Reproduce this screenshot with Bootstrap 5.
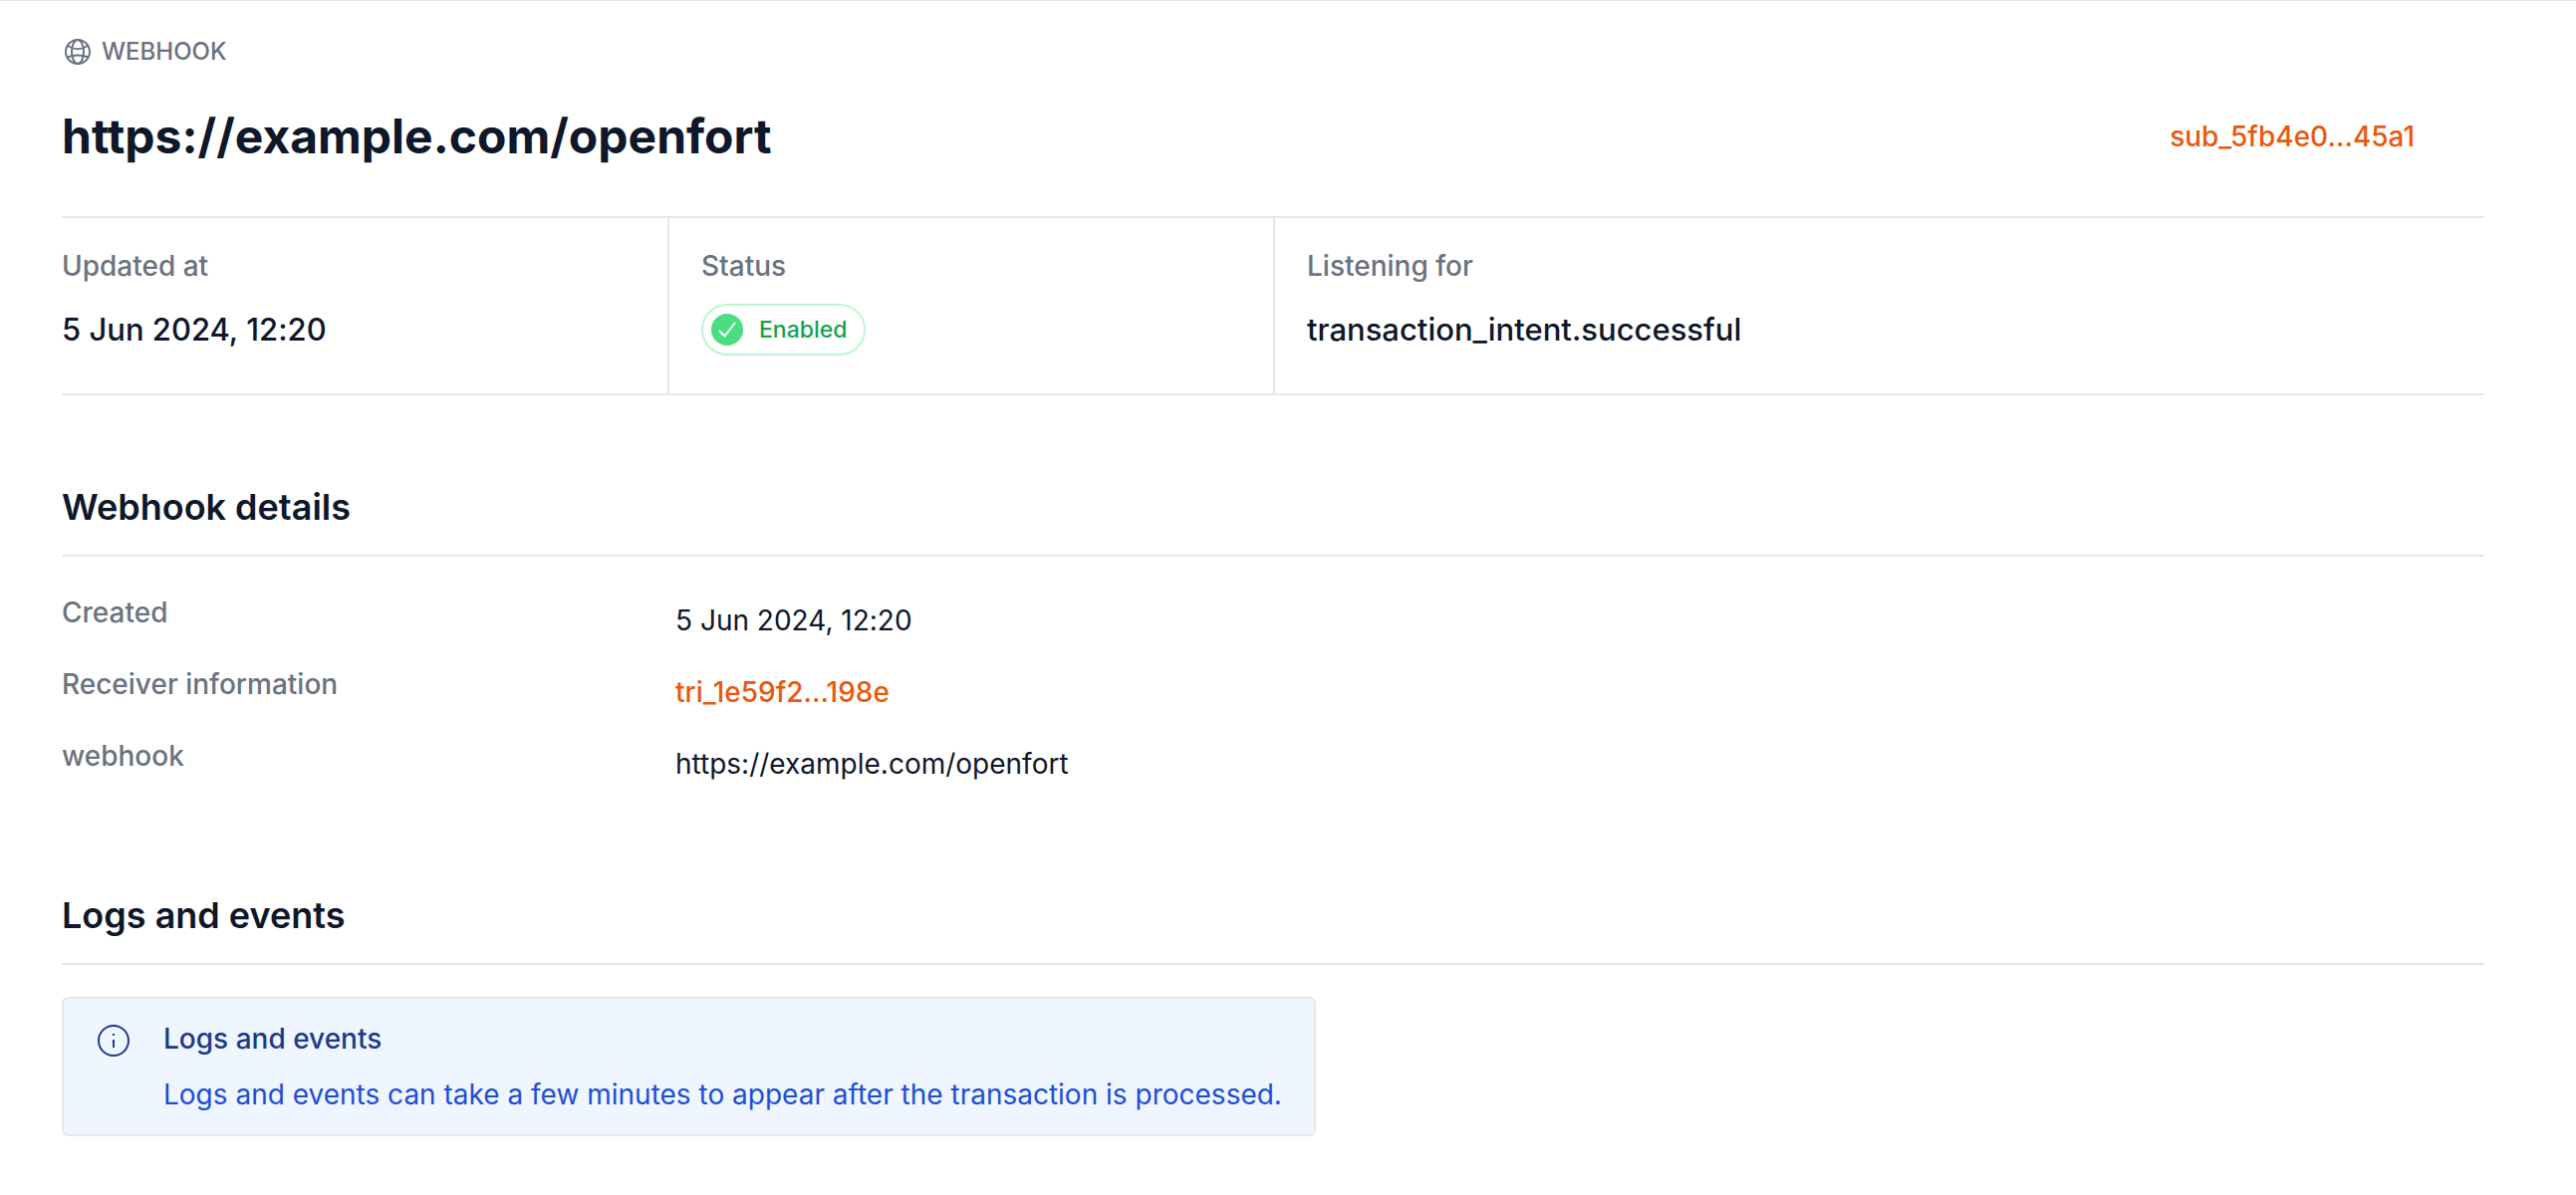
<!DOCTYPE html>
<html lang="en">
<head>
<meta charset="utf-8">
<meta name="viewport" content="width=device-width, initial-scale=1">
<title>Webhook</title>
<link href="https://cdn.jsdelivr.net/npm/bootstrap@5.3.0/dist/css/bootstrap.min.css" rel="stylesheet">
<style>
  :root { --line: #e5e7eb; --ink: #0f172a; --muted: #6b7280; }
  body { font-family: Inter, "Liberation Sans", sans-serif; font-size: 28px; line-height: 40px; font-variant-ligatures: none; color: var(--ink); border-top: 1px solid var(--line); }
  .page { padding: 35px 92px 56px 62px; }
  .eyebrow { font-size: 24px; line-height: 32px; font-weight: 500; color: var(--muted); }
  .page-head { padding: 37px 70px 48px 0; }
  .page-head h1 { font-size: 48px; line-height: 64px; font-weight: 700; }
  .id-link { color: #ea580c; font-weight: 500; }
  .facts { border-top: 2px solid var(--line); border-bottom: 2px solid var(--line); }
  .fact { padding: 28px 32px 38px; }
  .fact:first-child { padding-left: 0; }
  .fact + .fact { border-left: 2px solid var(--line); }
  .field-label { color: var(--muted); font-weight: 500; }
  .fact .field-label { margin-bottom: 18px; }
  .fact-value { min-height: 52px; font-size: 31px; line-height: 48px; font-weight: 500; }
  .status-pill { padding: 8px 16px 8px 8px; border: 2px solid #bbf7d0; font-size: 23px; line-height: 32px; font-weight: 500; color: #16a34a; }
  .section-title { margin: 84px 0 0; padding-bottom: 20px; border-bottom: 2px solid var(--line); font-size: 36px; line-height: 56px; font-weight: 600; }
  .details { padding-top: 36px; margin-bottom: 104px; }
  .details dd { padding-top: 8px; }
  .notice { margin-top: 32px; padding: 20px 32px; border: 2px solid var(--line); border-radius: 6px; background: #eff6ff; color: #1d4ed8; gap: 32px; }
  .notice h3 { font-size: 28px; line-height: 40px; font-weight: 500; color: #1e3a8a; }
  .notice svg { margin-top: 4px; }
</style>
</head>
<body>
<main class="page container-fluid">
  <header>
    <div class="eyebrow d-flex align-items-center gap-2">
      <svg width="32" height="32" viewBox="0 0 32 32" fill="none" stroke="currentColor" stroke-width="2" aria-hidden="true">
        <circle cx="16" cy="16" r="12"/>
        <ellipse cx="16" cy="16" rx="6" ry="12"/>
        <path d="M6 10Q16 16.500 26 10M5 21.500Q16 17.500 27 21.500"/>
      </svg>
      <span>WEBHOOK</span>
    </div>
    <div class="page-head d-flex align-items-center justify-content-between flex-wrap">
      <h1 class="m-0">https://example.com/openfort</h1>
      <a class="id-link text-decoration-none" href="#">sub_5fb4e0...45a1</a>
    </div>
  </header>

  <section class="facts row g-0" aria-label="Summary">
    <div class="fact col-3">
      <div class="field-label">Updated at</div>
      <div class="fact-value d-flex align-items-center">5 Jun 2024, 12:20</div>
    </div>
    <div class="fact col-3">
      <div class="field-label">Status</div>
      <div class="fact-value d-flex align-items-center">
        <span class="status-pill rounded-pill d-inline-flex align-items-center gap-3">
          <svg width="32" height="32" viewBox="0 0 32 32" fill="none" aria-hidden="true">
            <circle cx="16" cy="16" r="16" fill="#4ade80"/>
            <path d="M8.500 17.500L13.500 22.500L23.500 9.500" stroke="#fff" stroke-width="2" stroke-linecap="round" stroke-linejoin="round"/>
          </svg>
          Enabled
        </span>
      </div>
    </div>
    <div class="fact col-6">
      <div class="field-label">Listening for</div>
      <div class="fact-value d-flex align-items-center">transaction_intent.successful</div>
    </div>
  </section>

  <section>
    <h2 class="section-title">Webhook details</h2>
    <dl class="details d-flex flex-column gap-4">
      <div class="row g-0">
        <dt class="field-label col-3">Created</dt>
        <dd class="col-9 ps-2 mb-0">5 Jun 2024, 12:20</dd>
      </div>
      <div class="row g-0">
        <dt class="field-label col-3">Receiver information</dt>
        <dd class="col-9 ps-2 mb-0"><a class="id-link text-decoration-none" href="#">tri_1e59f2...198e</a></dd>
      </div>
      <div class="row g-0">
        <dt class="field-label col-3">webhook</dt>
        <dd class="col-9 ps-2 mb-0">https://example.com/openfort</dd>
      </div>
    </dl>
  </section>

  <section>
    <h2 class="section-title mt-0">Logs and events</h2>
    <div class="notice d-inline-flex align-items-start" role="note">
      <svg class="flex-shrink-0" width="36" height="36" viewBox="0 0 36 36" fill="none" stroke="#1e3a8a" stroke-width="2" aria-hidden="true">
        <circle cx="18" cy="18" r="15"/>
        <path d="M18 17V25M18 11V13"/>
      </svg>
      <div>
        <h3 class="mb-3">Logs and events</h3>
        <p class="m-0">Logs and events can take a few minutes to appear after the transaction is processed.</p>
      </div>
    </div>
  </section>
</main>
<script src="https://cdn.jsdelivr.net/npm/bootstrap@5.3.0/dist/js/bootstrap.bundle.min.js"></script>
</body>
</html>
